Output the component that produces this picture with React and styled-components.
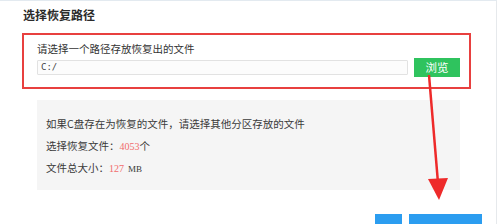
import styled, { createGlobalStyle } from "styled-components";

const Global = createGlobalStyle`
  html, body { margin: 0; padding: 0; background: #fff; }
  body { font-family: "Noto Sans CJK SC", "Noto Sans", sans-serif; }
`;

const Page = styled.div`
  position: relative;
  width: 497px;
  height: 224px;
  box-sizing: border-box;
  border-top: 1px solid #e3eaf0;
  border-right: 1px solid #e6e9ec;
  overflow: hidden;
  background: #fff;
`;

const Title = styled.h1`
  margin: 0;
  padding: 6px 0 0 23px;
  font-size: 12px;
  line-height: 16px;
  font-weight: 700;
  color: #2b2b2b;
`;

const PathBox = styled.section`
  margin: 10px 0 0 22px;
  width: 449px;
  height: 56px;
  box-sizing: border-box;
  border: 2px solid #e8403f;
  padding: 7px 0 0 13px;
`;

const Label = styled.div`
  font-size: 10.5px;
  line-height: 14px;
  color: #333;
`;

const InputRow = styled.div`
  display: flex;
  align-items: center;
  gap: 6px;
  margin-top: 2px;
`;

const PathInput = styled.div`
  width: 371px;
  height: 15px;
  box-sizing: border-box;
  border: 1px solid #e2e2e2;
  border-radius: 1px;
  background: #fcfcfc;
  padding-left: 3px;
  font-family: "DejaVu Sans Mono", monospace;
  font-size: 9px;
  line-height: 13px;
  color: #444;
`;

const Browse = styled.button`
  width: 46px;
  height: 19px;
  border: 0;
  padding: 0;
  background: #2fc35e;
  color: #fff;
  font-family: inherit;
  font-size: 11.5px;
  line-height: 19px;
`;

const InfoPanel = styled.section`
  margin: 11px 0 0 37px;
  width: 423px;
  height: 90px;
  box-sizing: border-box;
  background: #f5f5f5;
  padding: 17px 0 0 9px;
  display: flex;
  flex-direction: column;
  gap: 7px;
`;

const Line = styled.div`
  font-size: 10.5px;
  line-height: 14.5px;
  color: #3a3a3a;
`;

const Num = styled.span`
  color: #f26b6b;
  font-family: "Liberation Serif", serif;
  font-size: 10px;
`;

const Unit = styled.span`
  font-family: "Liberation Serif", serif;
  font-size: 9px;
  margin-left: 4px;
`;

const Footer = styled.div`
  display: flex;
  gap: 7px;
  margin: 24px 0 0 375px;
`;

const FootButton = styled.div`
  width: ${(p) => p.$w}px;
  height: 16px;
  background: #2b9df0;
`;

const Arrow = styled.svg`
  position: absolute;
  left: 0;
  top: 0;
  pointer-events: none;
`;

export default function App() {
  return (
    <>
      <Global />
      <Page>
        <Title>选择恢复路径</Title>
        <PathBox>
          <Label>请选择一个路径存放恢复出的文件</Label>
          <InputRow>
            <PathInput>C:/</PathInput>
            <Browse>浏览</Browse>
          </InputRow>
        </PathBox>
        <InfoPanel>
          <Line>如果C盘存在为恢复的文件，请选择其他分区存放的文件</Line>
          <Line>
            选择恢复文件：<Num>4053</Num>个
          </Line>
          <Line>
            文件总大小：<Num>127</Num>
            <Unit>MB</Unit>
          </Line>
        </InfoPanel>
        <Footer>
          <FootButton $w={27} />
          <FootButton $w={73} />
        </Footer>
        <Arrow width="500" height="224" viewBox="0 0 500 224">
          <line x1="429" y1="74" x2="438" y2="182" stroke="#ee2a2a" strokeWidth="2.5" />
          <polygon points="428,178 448,177 439,199" fill="#ee2a2a" />
        </Arrow>
      </Page>
    </>
  );
}
